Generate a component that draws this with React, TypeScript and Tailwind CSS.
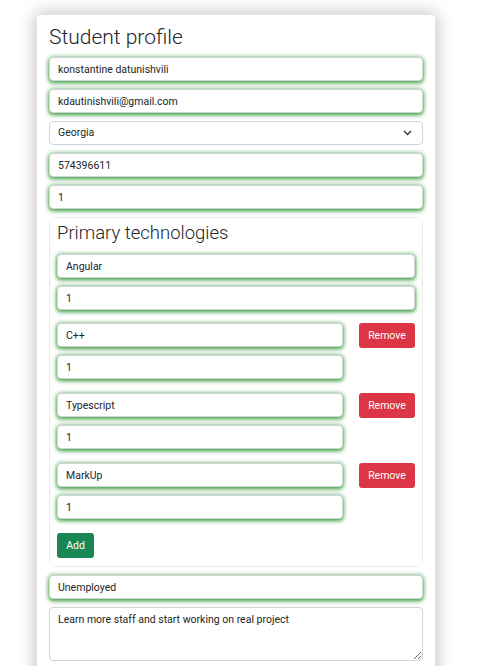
import React from "react";

const font = { fontFamily: "Roboto, 'Noto Sans', sans-serif" };

const glow =
  "h-6 w-full rounded-[4px] border border-[#ced4da] bg-white px-2 text-[10.5px] text-[#212529] outline-none shadow-[0_2px_4px_rgba(40,150,40,0.8),0_0_4px_rgba(40,150,40,0.6)]";

function Field({ value, className = "" }: { value: string; className?: string }) {
  return <input readOnly value={value} className={`${glow} ${className}`} />;
}

const techs = [
  { name: "Angular", level: "1", removable: false },
  { name: "C++", level: "1", removable: true },
  { name: "Typescript", level: "1", removable: true },
  { name: "MarkUp", level: "1", removable: true },
];

export default function App() {
  return (
    <div className="min-h-[666px] bg-white pt-[14px] pl-[36px]" style={font}>
      <div className="w-[400px] rounded-[4px] border border-[#e5e5e5] bg-white px-3 pt-[10px] pb-6 shadow-[0_0_18px_rgba(0,0,0,0.28)]">
        <div className="flex flex-col gap-2">
          <h3 className="text-[21px] font-light leading-[24px] text-[#212529]">Student profile</h3>
          <Field value="konstantine datunishvili" />
          <Field value="kdautinishvili@gmail.com" />

          {/* country select */}
          <div className="flex h-6 items-center justify-between rounded-[4px] border border-[#ced4da] bg-white pl-2 pr-[10px] text-[10.5px] text-[#212529]">
            <span>Georgia</span>
            <svg width="9" height="6" viewBox="0 0 9 6" fill="none">
              <path d="M1 1l3.5 3.5L8 1" stroke="#343a40" strokeWidth="1.5" />
            </svg>
          </div>

          <Field value="574396611" />
          <Field value="1" />

          {/* technologies */}
          <div className="rounded-[6px] border border-[#ebebeb] bg-white px-[7px] pt-[4px] pb-2">
            <h4 className="mb-[10px] text-[18.5px] font-light leading-[22px] text-[#212529]">Primary technologies</h4>
            <div className="flex flex-col gap-[14px]">
              {techs.map((t, i) => (
                <div key={i} className={`flex items-start justify-between ${i === 0 ? "-mb-px" : ""}`}>
                  <div className={`flex flex-col gap-2 ${t.removable ? "w-[286px]" : "w-full"}`}>
                    <Field value={t.name} />
                    <Field value={t.level} />
                  </div>
                  {t.removable && (
                    <button className="h-[25px] w-[56px] rounded-[3px] bg-[#dc3545] text-[10.5px] text-white">
                      Remove
                    </button>
                  )}
                </div>
              ))}
              <button className="h-[25px] w-[37px] rounded-[3px] bg-[#198754] text-[10.5px] text-white">Add</button>
            </div>
          </div>

          <Field value="Unemployed" />
          <textarea
            readOnly
            value="Learn more staff and start working on real project"
            className="h-[54px] w-full rounded-[4px] border border-[#ced4da] bg-white px-2 py-[4px] text-[10.5px] leading-[16px] text-[#212529] outline-none"
          />
        </div>
      </div>
    </div>
  );
}
